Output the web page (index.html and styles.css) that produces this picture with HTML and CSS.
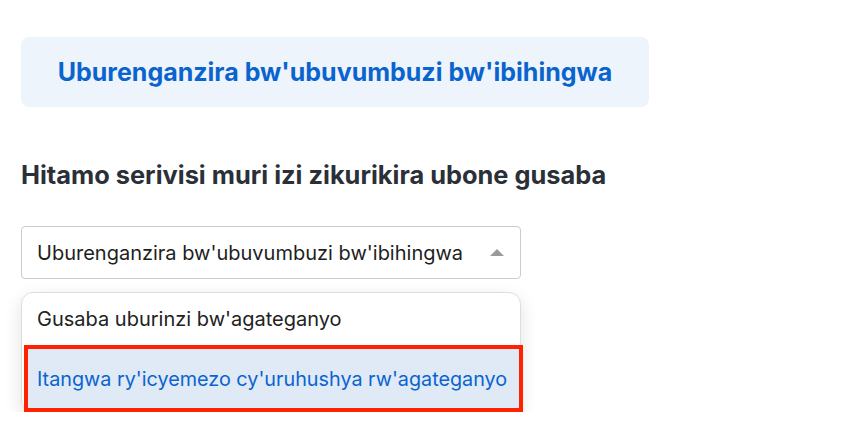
FILE: index.html
```html
<!DOCTYPE html>
<html>
<head>
<meta charset="utf-8">
<link rel="stylesheet" href="styles.css">
</head>
<body>
<div class="page">
  <div class="banner">Uburenganzira bw'ubuvumbuzi bw'ibihingwa</div>
  <h2 class="title">Hitamo serivisi muri izi zikurikira ubone gusaba</h2>
  <div class="select">
    <span class="select-value">Uburenganzira bw'ubuvumbuzi bw'ibihingwa</span>
    <span class="arrow"></span>
  </div>
  <div class="menu">
    <div class="option">Gusaba uburinzi bw'agateganyo</div>
    <div class="option active">Itangwa ry'icyemezo cy'uruhushya rw'agateganyo</div>
  </div>
</div>
</body>
</html>
```

FILE: styles.css
```css
* { box-sizing: border-box; }
html, body { margin: 0; padding: 0; background: #ffffff; }
body { font-family: Inter, "Noto Sans", "Liberation Sans", sans-serif; }
.page { padding: 37px 21px 0 21px; display: flex; flex-direction: column; align-items: flex-start; }
.banner {
  width: 628px; height: 70px; border-radius: 8px;
  background: #eef4fb; color: #0a64cf;
  font-weight: 700; font-size: 25px;
  display: flex; align-items: center; justify-content: center;
}
.title {
  margin: 52px 0 0 0; font-size: 25.4px; font-weight: 700; color: #2b3038;
  line-height: 32px;
}
.select {
  margin-top: 35px; width: 500px; height: 53px;
  border: 1px solid #cccccc; border-radius: 4px;
  display: flex; align-items: center; justify-content: space-between;
  padding: 0 16px 0 15px; font-size: 20px; color: #1e1e1e;
}
.arrow {
  width: 0; height: 0;
  border-left: 7px solid transparent; border-right: 7px solid transparent;
  border-bottom: 7px solid #9a9a9a;
}
.menu {
  margin-top: 13px; width: 500px; border-radius: 12px;
  border: 1px solid #dedede; background: #ffffff;
  box-shadow: 0 6px 18px rgba(0,0,0,0.12);
  display: flex; flex-direction: column;
}
.option {
  height: 52px; display: flex; align-items: center; padding-left: 15px;
  font-size: 20px; color: #222222;
}
.option.active {
  height: 67px; margin: 0 -3px -1px 2px; padding-left: 9px;
  background: #dfeaf6; color: #0a64cf; font-size: 19.8px;
  border: 4px solid #ff2200;
}
```
